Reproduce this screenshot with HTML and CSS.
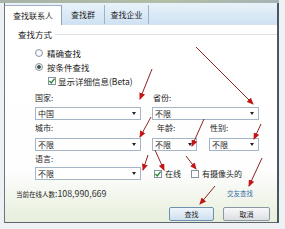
FILE: index.html
```html
<!DOCTYPE html>
<html lang="zh-CN">
<head>
<meta charset="utf-8">
<title>查找联系人</title>
<link rel="stylesheet" href="styles.css">
</head>
<body>
<div class="top"></div>
<div class="win">
  <div class="tabs">
    <div class="tab active">查找联系人</div>
    <div class="tab t2">查找群</div>
    <div class="tab t3">查找企业</div>
  </div>
  <div class="panel">
    <div class="ghead"><span>查找方式</span><i class="gline"></i></div>
    <div class="opt first"><span class="radio"></span>精确查找</div>
    <div class="opt"><span class="radio on"></span>按条件查找</div>
    <div class="opt sub"><span class="cb"><svg viewBox="0 0 8 8" width="8" height="8"><path d="M1.4 3.9 L3.2 5.9 L6.6 1.6" fill="none" stroke="#2c8a2c" stroke-width="1.4"/></svg></span>显示详细信息(Beta)</div>

    <div class="lrow m4"><span class="l1">国家:</span><span>省份:</span></div>
    <div class="srow m4">
      <div class="sel w1"><span>中国</span><i class="caret"></i></div>
      <div class="sel w2 g11"><span>不限</span><i class="caret"></i></div>
    </div>

    <div class="lrow m1"><span class="l1b">城市:</span><span class="l2b">年龄:</span><span>性别:</span></div>
    <div class="srow m5">
      <div class="sel w1"><span>不限</span><i class="caret"></i></div>
      <div class="sel wa g11"><span>不限</span><i class="caret"></i></div>
      <div class="sel wg g12"><span>不限</span><i class="caret"></i></div>
    </div>

    <div class="lrow m1"><span>语言:</span></div>
    <div class="srow m3">
      <div class="sel w1"><span>不限</span><i class="caret"></i></div>
      <span class="cb ck1"><svg viewBox="0 0 8 8" width="8" height="8"><path d="M1.4 3.9 L3.2 5.9 L6.6 1.6" fill="none" stroke="#2c8a2c" stroke-width="1.4"/></svg></span><span class="cbt">在线</span>
      <span class="cb ck2"></span><span class="cbt">有摄像头的</span>
    </div>

    <div class="status"><span class="cnt">当前在线人数<span class="num">:108,990,669</span></span><span class="link">交友查找</span></div>
    <div class="btns"><button class="btn primary">查找</button><button class="btn cancel">取消</button></div>
  </div>
</div>
<svg class="marks" width="285" height="229" viewBox="0 0 285 229">
  <defs>
    <marker id="ah" markerUnits="userSpaceOnUse" markerWidth="7" markerHeight="6" refX="6" refY="3" orient="auto">
      <path d="M0,0 L7,3 L0,6 z" fill="#c21616"/>
    </marker>
  </defs>
  <g stroke="#8e2222" stroke-width="1" fill="none" marker-end="url(#ah)">
    <path d="M196,47 L253,104"/>
    <path d="M152,69 L140,99"/>
    <path d="M151,117 L140,137"/>
    <path d="M204,119 L192,146"/>
    <path d="M261,124 L254,139"/>
    <path d="M148,155 L143,170"/>
    <path d="M155,150 L164,170"/>
    <path d="M186,156 L196,169"/>
    <path d="M262,158 L249,186"/>
    <path d="M215,186 L200,204"/>
  </g>
</svg>
</body>
</html>
```
FILE: styles.css
```css
html, body {
  margin: 0;
  padding: 0;
}
body {
  width: 285px;
  height: 229px;
  overflow: hidden;
  position: relative;
  background: #eef1f3;
  font-family: "Noto Sans CJK SC", "Noto Sans", sans-serif;
  color: #1c1c1c;
}
.top {
  width: 279px;
  height: 3px;
  background: linear-gradient(to right, #a9b2a8, #b2bea6 60%, #a8b2b6);
}
.win {
  margin-left: 4px;
  width: 272px;
  border-left: 1px solid #6b7682;
  border-right: 2px solid #4c5660;
  background: #fff;
}
.tabs {
  height: 21px;
  box-sizing: border-box;
  padding-top: 2px;
  display: flex;
  background: linear-gradient(#e9f2fa, #cfe2f3);
}
.tab {
  font-size: 8px;
  line-height: 19px;
  height: 19px;
  text-align: center;
  box-sizing: border-box;
  border-right: 1px solid #9fb3c6;
}
.tab.active {
  width: 57px;
  height: 20px;
  margin-bottom: -1px;
  background: #fff;
  border-top: 1px solid #9fb0c2;
  border-right: 1px solid #8fa2b6;
  position: relative;
}
.tab.t2 { width: 43px; }
.tab.t3 { width: 44px; }

.panel {
  height: 199px;
  box-sizing: border-box;
  border-top: 1px solid #d6e1eb;
  border-bottom: 1px solid #5d6670;
  background: linear-gradient(to bottom, #ffffff 0%, #fefefe 74%, #e6eedb 100%);
  display: flex;
  flex-direction: column;
}
.ghead {
  height: 18px;
  display: flex;
  align-items: center;
  padding-left: 13px;
  font-size: 8.5px;
}
.gline {
  flex: 1;
  height: 1px;
  background: #dde2e6;
  margin-left: 3px;
}
.opt {
  height: 14px;
  display: flex;
  align-items: center;
  padding-left: 30px;
  font-size: 8.5px;
}
.opt.first { margin-top: 3px; }
.opt.sub {
  height: 13px;
  padding-left: 43px;
}
.radio {
  width: 8px;
  height: 8px;
  box-sizing: border-box;
  border-radius: 50%;
  border: 1px solid #8c98a4;
  background: radial-gradient(circle, #ffffff 30%, #e0e5ea 100%);
  margin-right: 4px;
}
.radio.on {
  background: radial-gradient(circle, #3f5c40 0, #3f5c40 1.5px, #f4f6f8 2.2px, #dfe4e9 100%);
}
.cb {
  width: 8px;
  height: 8px;
  box-sizing: border-box;
  border: 1px solid #8594a5;
  background: #fff;
  margin-right: 2px;
  display: flex;
  align-items: center;
  justify-content: center;
  overflow: hidden;
}
.cb svg { flex: none; }
.lrow {
  height: 12px;
  display: flex;
  align-items: center;
  padding-left: 30px;
  font-size: 8px;
}
.l1 { width: 118px; }
.l1b { width: 122px; }
.l2b { width: 53px; }
.m1 { margin-top: 1px; }
.m3 { margin-top: 3px; }
.m4 { margin-top: 4px; }
.m5 { margin-top: 5px; }
.srow {
  height: 13px;
  display: flex;
  align-items: center;
  padding-left: 30px;
}
.sel {
  height: 13px;
  box-sizing: border-box;
  border: 1px solid #a3b5c7;
  background: #fff;
  display: flex;
  align-items: center;
  justify-content: space-between;
  padding: 0 4px 0 2px;
  font-size: 8px;
}
.caret {
  width: 0;
  height: 0;
  border-left: 2.5px solid transparent;
  border-right: 2.5px solid transparent;
  border-top: 3px solid #222;
}
.w1 { width: 106px; }
.w2 { width: 107px; }
.wa { width: 45px; }
.wg { width: 50px; }
.g11 { margin-left: 11px; }
.g12 { margin-left: 12px; }
.ck1 { margin-left: 13px; margin-right: 3px; }
.ck2 { margin-left: 10px; margin-right: 3px; }
.cbt { font-size: 8px; }
.status {
  margin-top: 6px;
  height: 14px;
  display: flex;
  align-items: center;
  padding-left: 11px;
  padding-right: 24px;
  font-size: 6.5px;
}
.num { font-size: 8.8px; color: #333; }
.link {
  margin-left: auto;
  color: #3a6ea5;
}
.btns {
  margin-top: 7px;
  height: 14px;
  display: flex;
  justify-content: flex-end;
  padding-right: 7px;
}
.btn {
  height: 14px;
  margin: 0;
  padding: 0;
  box-sizing: border-box;
  border: 1px solid #8b97a2;
  border-radius: 2px;
  background: linear-gradient(#f7f8f9, #dcdfe3);
  font-family: "Noto Sans CJK SC", "Noto Sans", sans-serif;
  font-size: 7px;
  line-height: 12px;
  color: #1c1c1c;
}
.btn.primary {
  width: 45px;
  border-color: #6f8fae;
  background: linear-gradient(#eef5fb, #cfe0ee);
}
.btn.cancel {
  width: 47px;
  margin-left: 9px;
}
.marks {
  position: absolute;
  left: 0;
  top: 0;
  pointer-events: none;
}
```
